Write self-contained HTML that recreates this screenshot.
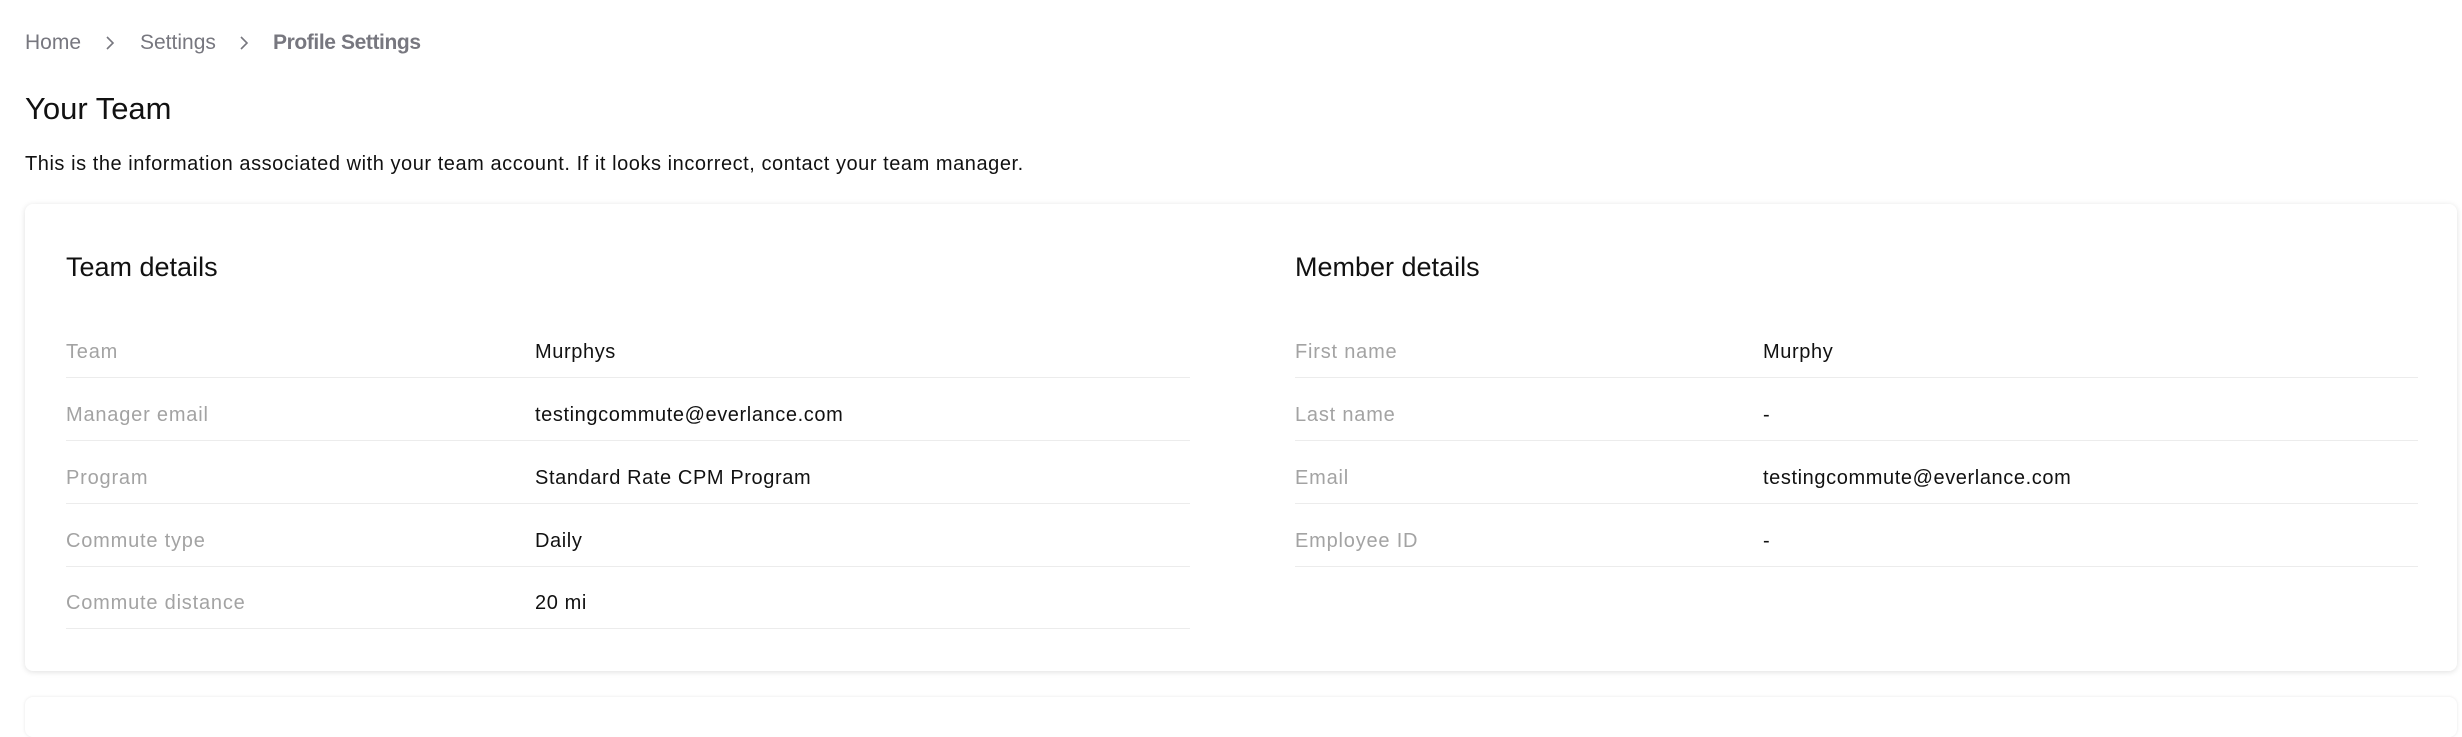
<!DOCTYPE html>
<html><head><meta charset="utf-8"><style>
*{margin:0;padding:0;box-sizing:border-box}
body{width:2462px;height:698px;background:#fff;font-family:"Liberation Sans",sans-serif;color:#111;position:relative;overflow:hidden}
.a{position:absolute;white-space:nowrap}
.bc{top:31px;font-size:21px;color:#77777f}
.card{position:absolute;left:25px;top:204px;width:2432px;height:467px;border-radius:8px;box-shadow:0 1px 6px rgba(0,0,0,.13);background:#fff}
.card2{position:absolute;left:25px;top:697px;width:2432px;height:40px;border-radius:8px;box-shadow:0 0 3px rgba(0,0,0,.1)}
.h{font-size:27px;top:252px}
.lab{font-size:20px;color:#a3a3a3;letter-spacing:0.8px}
.val{font-size:20px;color:#111;letter-spacing:0.6px}
.ln{position:absolute;height:1px;background:#ececec}
</style></head><body>
<div class="a bc" style="left:25px">Home</div>
<svg class="a" style="left:104px;top:35px" width="12" height="16"><path d="M3 2l6 6-6 6" fill="none" stroke="#77777f" stroke-width="1.6"/></svg>
<div class="a bc" style="left:140px">Settings</div>
<svg class="a" style="left:238px;top:35px" width="12" height="16"><path d="M3 2l6 6-6 6" fill="none" stroke="#77777f" stroke-width="1.6"/></svg>
<div class="a bc" style="left:273px;font-weight:bold;letter-spacing:-0.4px">Profile Settings</div>
<div class="a" style="left:25px;top:91px;font-size:31px">Your Team</div>
<div class="a" style="left:25px;top:153px;font-size:20px;letter-spacing:0.55px">This is the information associated with your team account. If it looks incorrect, contact your team manager.</div>
<div class="card2"></div>
<div class="card"></div>
<div class="a h" style="left:66px">Team details</div>
<div class="a h" style="left:1295px">Member details</div>

<div class="a lab" style="left:66px;top:341px">Team</div><div class="a val" style="left:535px;top:341px">Murphys</div>
<div class="a lab" style="left:66px;top:404px">Manager email</div><div class="a val" style="left:535px;top:404px">testingcommute@everlance.com</div>
<div class="a lab" style="left:66px;top:467px">Program</div><div class="a val" style="left:535px;top:467px">Standard Rate CPM Program</div>
<div class="a lab" style="left:66px;top:530px">Commute type</div><div class="a val" style="left:535px;top:530px">Daily</div>
<div class="a lab" style="left:66px;top:592px">Commute distance</div><div class="a val" style="left:535px;top:592px">20 mi</div>
<div class="ln" style="left:66px;width:1124px;top:377px"></div>
<div class="ln" style="left:66px;width:1124px;top:440px"></div>
<div class="ln" style="left:66px;width:1124px;top:503px"></div>
<div class="ln" style="left:66px;width:1124px;top:566px"></div>
<div class="ln" style="left:66px;width:1124px;top:628px"></div>

<div class="a lab" style="left:1295px;top:341px">First name</div><div class="a val" style="left:1763px;top:341px">Murphy</div>
<div class="a lab" style="left:1295px;top:404px">Last name</div><div class="a val" style="left:1763px;top:404px">-</div>
<div class="a lab" style="left:1295px;top:467px">Email</div><div class="a val" style="left:1763px;top:467px">testingcommute@everlance.com</div>
<div class="a lab" style="left:1295px;top:530px">Employee ID</div><div class="a val" style="left:1763px;top:530px">-</div>
<div class="ln" style="left:1295px;width:1123px;top:377px"></div>
<div class="ln" style="left:1295px;width:1123px;top:440px"></div>
<div class="ln" style="left:1295px;width:1123px;top:503px"></div>
<div class="ln" style="left:1295px;width:1123px;top:566px"></div>
</body></html>
